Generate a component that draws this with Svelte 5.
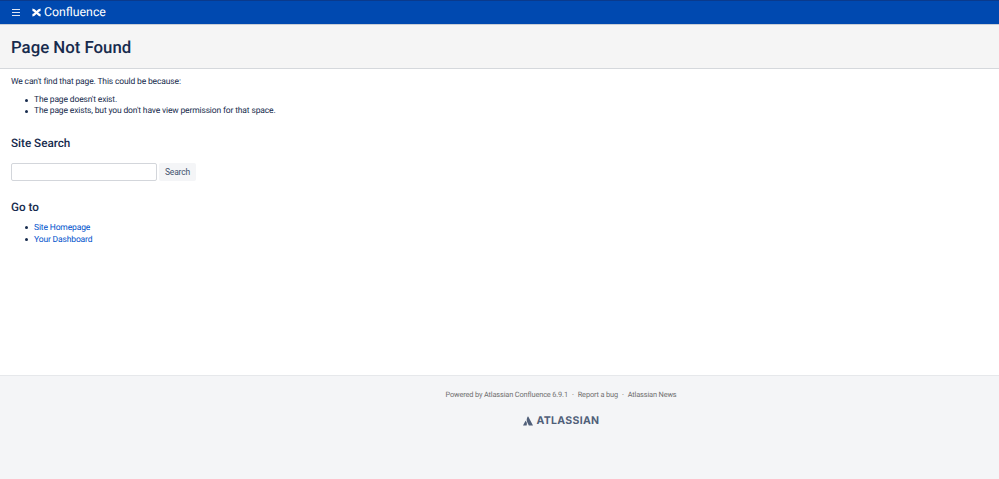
<script>
  const reasons = [
    "The page doesn't exist.",
    "The page exists, but you don't have view permission for that space."
  ];
  const links = ['Site Homepage', 'Your Dashboard'];
</script>

<div class="page">
  <header class="topbar">
    <svg class="menu" viewBox="0 0 8 7" width="8" height="7" aria-hidden="true">
      <path d="M0 0.5h8M0 3.5h8M0 6.5h8" stroke="#dfe6f3" stroke-width="1" fill="none" />
    </svg>
    <svg class="logo" viewBox="0 0 11 10" width="9" height="9" aria-hidden="true">
      <path d="M0.5 8.4C4 8.4 7 1.6 10.5 1.6" stroke="#fff" stroke-width="3" fill="none" />
      <path d="M0.5 1.6C4 1.6 7 8.4 10.5 8.4" stroke="#fff" stroke-width="3" fill="none" />
    </svg>
    <span class="brand">Confluence</span>
  </header>

  <div class="title-band">
    <h1>Page Not Found</h1>
  </div>

  <main>
    <p>We can't find that page. This could be because:</p>
    <ul class="reasons">
      {#each reasons as reason}
        <li>{reason}</li>
      {/each}
    </ul>

    <h2 class="search-title">Site Search</h2>
    <form class="search" on:submit|preventDefault>
      <input type="text" aria-label="Search" />
      <button type="submit">Search</button>
    </form>

    <h2 class="goto-title">Go to</h2>
    <ul>
      {#each links as link}
        <li><a href="#top">{link}</a></li>
      {/each}
    </ul>
  </main>

  <footer>
    <div class="footer-links">
      <span>Powered by Atlassian Confluence 6.9.1</span>
      <span class="dot">·</span>
      <span>Report a bug</span>
      <span class="dot">·</span>
      <span>Atlassian News</span>
    </div>
    <div class="atlassian">
      <svg viewBox="0 0 12 11" width="10" height="10" aria-hidden="true">
        <path d="M3.4 5.4C3.2 5.2 3 5.2 2.9 5.5L0 11H4.3C4.9 9.2 4.9 7 3.4 5.4Z" fill="#505f79" />
        <path d="M5.7 0.2C4.2 2.4 4.1 5 5.1 7L7 11H12L6.3 0.2C6.1 -0.1 5.9 -0.1 5.7 0.2Z" fill="#505f79" />
      </svg>
      <span>ATLASSIAN</span>
    </div>
  </footer>
</div>

<style>
  :global(body) {
    margin: 0;
    background: #fff;
  }

  .page {
    height: 479px;
    display: flex;
    flex-direction: column;
    overflow: hidden;
    font-family: "Roboto", "Open Sans", sans-serif;
    font-size: 8.5px;
    letter-spacing: -0.15px;
    text-rendering: geometricPrecision;
    color: #172b4d;
  }

  .topbar {
    height: 24px;
    box-sizing: border-box;
    border-top: 1px solid #0a3a8c;
    background: #0049b0;
    display: flex;
    align-items: center;
    padding-left: 12px;
    flex-shrink: 0;
  }

  .logo {
    margin-left: 12px;
  }

  .brand {
    margin-left: 3px;
    color: #fff;
    font-size: 12.3px;
    letter-spacing: 0;
    line-height: 24px;
  }

  .title-band {
    height: 45px;
    box-sizing: border-box;
    background: #f5f5f5;
    border-bottom: 1px solid #d5d8dc;
    border-top: 1px solid #c9ced6;
    padding: 2px 0 0 11px;
    display: flex;
    align-items: center;
    flex-shrink: 0;
  }

  h1 {
    margin: 0;
    font-size: 16.8px;
    font-weight: 500;
    letter-spacing: 0;
    line-height: 24px;
    color: #172b4d;
  }

  main {
    flex: 1;
    padding: 7px 11px 0;
  }

  p {
    margin: 0;
    line-height: 12px;
  }

  ul {
    margin: 7px 0 0;
    padding: 0 0 0 23px;
    list-style: none;
  }

  .reasons li {
    line-height: 11px;
  }

  li {
    position: relative;
    line-height: 12px;
  }

  li::before {
    content: "";
    position: absolute;
    left: -9px;
    top: 4px;
    width: 3px;
    height: 3px;
    border-radius: 50%;
    background: #172b4d;
  }

  h2 {
    margin: 0;
    font-size: 11.7px;
    font-weight: 500;
    letter-spacing: 0;
    line-height: 16px;
    color: #172b4d;
  }

  .search-title {
    margin-top: 18px;
  }

  .search {
    display: flex;
    gap: 2px;
    margin-top: 12px;
  }

  input {
    width: 146px;
    height: 18px;
    box-sizing: border-box;
    border: 1px solid #d3d6db;
    border-radius: 2px;
    background: #fff;
    padding: 0 4px;
    margin: 0;
  }

  button {
    width: 37px;
    height: 18px;
    margin: 0;
    padding: 0;
    border: 0;
    border-radius: 2px;
    background: #f4f5f7;
    color: #42526e;
    font: inherit;
    letter-spacing: inherit;
  }

  .goto-title {
    margin-top: 18px;
  }

  a {
    color: #0052cc;
    text-decoration: none;
  }

  footer {
    height: 104px;
    box-sizing: border-box;
    background: #f4f5f7;
    border-top: 1px solid #e6e8eb;
    padding-top: 13px;
    flex-shrink: 0;
    display: flex;
    flex-direction: column;
    align-items: center;
    color: #707070;
    font-size: 7.4px;
    padding-left: 123px;
  }

  .footer-links {
    display: flex;
    gap: 4px;
    line-height: 11px;
  }

  .atlassian {
    display: flex;
    align-items: center;
    gap: 4px;
    margin-top: 15px;
    color: #505f79;
    font-family: "Inter", sans-serif;
    font-size: 10.5px;
    font-weight: 700;
    letter-spacing: 0.3px;
    line-height: 12px;
  }
</style>
